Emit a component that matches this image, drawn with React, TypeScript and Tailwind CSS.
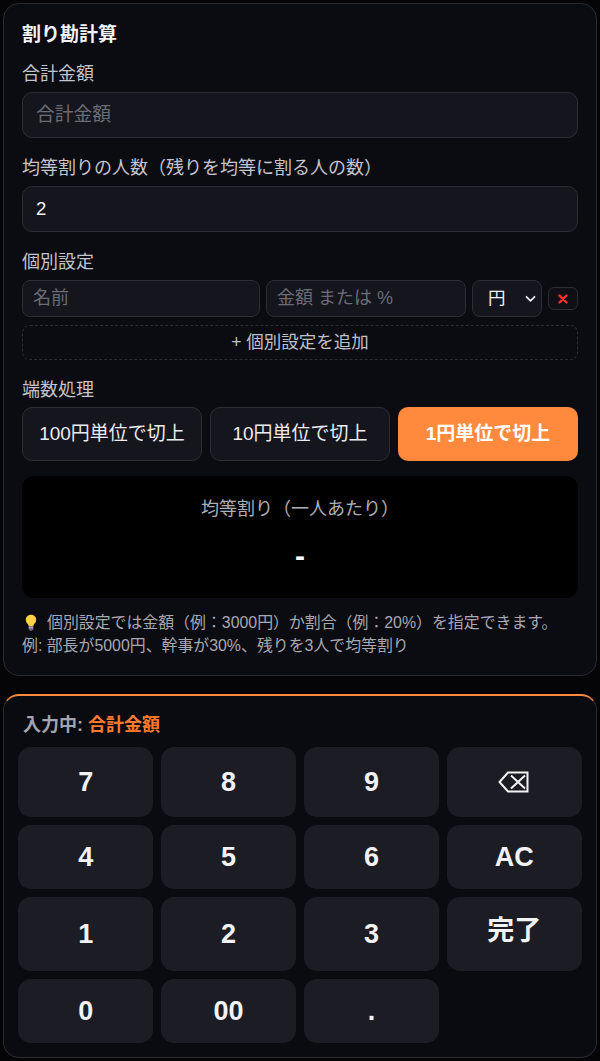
import React from "react";

const F = { fontFamily: '"Liberation Sans", "Noto Sans CJK JP", sans-serif' };

function Bulb() {
  return (
    <svg width="12" height="17" viewBox="0 0 12 17" className="inline-block mr-[10px] -mt-[2px] align-middle">
      <path d="M6 0.8C3 0.8 0.8 3 0.8 5.8c0 1.9 1 3.1 1.9 4.1.6.7 1 1.3 1 2.1h4.6c0-.8.4-1.4 1-2.1.9-1 1.9-2.2 1.9-4.1C11.2 3 9 0.8 6 0.8z" fill="#ffd23f" />
      <rect x="3.6" y="12.3" width="4.8" height="1.6" fill="#b9a6c9" />
      <rect x="3.6" y="14.1" width="4.8" height="1.5" fill="#9c86b0" />
      <rect x="4.6" y="15.6" width="2.8" height="1.1" rx="0.5" fill="#7d6b8e" />
    </svg>
  );
}

function Key({ label, cls = "" }: { label: React.ReactNode; cls?: string }) {
  return (
    <div className={`flex items-center justify-center rounded-[13px] bg-[#1c1c24] text-[27px] font-bold text-[#f2f2f5] ${cls}`}>
      {label}
    </div>
  );
}

export default function App() {
  return (
    <div style={F} className="min-h-[1061px] w-[600px] bg-[#050508] px-[3px] pt-[3px] pb-[3px]">
      {/* Card */}
      <div className="rounded-[16px] border border-[#2a2a33] bg-[#0b0b12] p-[18px]">
        <div className="h-[26px] text-[19px] font-bold leading-[26px] text-[#f4f4f6] mb-[14px]">割り勘計算</div>

        <div className="text-[18px] leading-[24px] text-[#c4c4cc] mb-[6px]">合計金額</div>
        <div className="h-[46px] rounded-[10px] border border-[#2c2c36] bg-[#15151d] pl-[13px] flex items-center text-[18.8px] text-[#6c6c76] mb-[18px]">合計金額</div>

        <div className="text-[18px] leading-[24px] text-[#c4c4cc] mb-[6px]">均等割りの人数（残りを均等に割る人の数）</div>
        <div className="h-[46px] rounded-[10px] border border-[#2c2c36] bg-[#15151d] pl-[13px] flex items-center text-[18.5px] text-[#f4f4f6] mb-[18px]">2</div>

        <div className="text-[18px] leading-[24px] text-[#c4c4cc] mb-[6px]">個別設定</div>
        <div className="flex items-center gap-[6px] h-[37px]">
          <div className="h-[37px] flex-1 min-w-0 rounded-[8px] border border-[#2c2c36] bg-[#15151d] pl-[10px] flex items-center text-[18px] text-[#6c6c76]">名前</div>
          <div className="h-[37px] w-[200px] shrink-0 rounded-[8px] border border-[#2c2c36] bg-[#15151d] pl-[10px] flex items-center text-[18px] text-[#6c6c76]">金額 または %</div>
          <div className="h-[37px] w-[70px] shrink-0 rounded-[8px] border border-[#2c2c36] bg-[#15151d] flex items-center justify-between pl-[15px] pr-[5px] text-[17.5px] text-[#f0f0f3]">
            <span>円</span>
            <svg width="11" height="8" viewBox="0 0 11 8"><path d="M1.5 1.8 5.5 5.8 9.5 1.8" stroke="#e8e8ec" strokeWidth="1.8" fill="none" strokeLinecap="round" strokeLinejoin="round" /></svg>
          </div>
          <div className="h-[23px] w-[30px] shrink-0 rounded-[6px] border border-[#2c2c36] bg-[#0f0f16] flex items-center justify-center">
            <svg width="10" height="10" viewBox="0 0 10 10"><path d="M1.5 1.5 8.5 8.5M8.5 1.5 1.5 8.5" stroke="#ff3030" strokeWidth="2.4" strokeLinecap="round" /></svg>
          </div>
        </div>
        <div className="mt-[8px] h-[35px] rounded-[8px] border border-dashed border-[#2c2c36] flex items-center justify-center text-[17.5px] text-[#c0c0c8] mb-[18px]">+&nbsp;個別設定を追加</div>

        <div className="text-[18px] leading-[24px] text-[#c4c4cc] mb-[5px]">端数処理</div>
        <div className="grid grid-cols-3 gap-[8px] mb-[15px]">
          <div className="h-[54px] rounded-[10px] border border-[#2c2c36] bg-[#15151d] flex items-center justify-center text-[19px] text-[#ececf0]">100円単位で切上</div>
          <div className="h-[54px] rounded-[10px] border border-[#2c2c36] bg-[#15151d] flex items-center justify-center text-[19px] text-[#ececf0]">10円単位で切上</div>
          <div className="h-[54px] rounded-[10px] bg-[#ff8a3d] flex items-center justify-center text-[19px] font-bold text-white">1円単位で切上</div>
        </div>

        <div className="rounded-[12px] bg-black pt-[20px] pb-[22px] flex flex-col items-center mb-[13px]">
          <div className="h-[26px] leading-[26px] text-[18px] text-[#aeaeb6]">均等割り（一人あたり）</div>
          <div className="mt-[14px] h-[40px] leading-[40px] text-[30px] font-bold text-white">-</div>
        </div>

        <div className="text-[15.9px] leading-[23px] text-[#a8a8b0] pl-[3px] whitespace-nowrap">
          <div><Bulb />個別設定では金額（例：3000円）か割合（例：20%）を指定できます。</div>
          <div className="-ml-[3px]">例: 部長が5000円、幹事が30%、残りを3人で均等割り</div>
        </div>
      </div>

      {/* Keypad */}
      <div className="mt-[18px] rounded-[16px] border border-[#2a2a33] border-t-2 border-t-[#ff8a3d] bg-[#0a0a11] px-[14px] pt-[15px] pb-[14px]">
        <div className="h-[28px] leading-[28px] text-[18px] font-semibold text-[#a4a4ac] mb-[8px] pl-[5px]">
          入力中: <span className="font-bold text-[#ff7a2e]">合計金額</span>
        </div>
        <div className="grid grid-cols-4 grid-rows-[70px_64px_74px_64px] gap-x-[7.5px] gap-y-[8px]">
          <Key label="7" />
          <Key label="8" />
          <Key label="9" />
          <Key
            label={
              <svg width="32" height="22" viewBox="0 0 32 22">
                <path d="M10 1.5H29.5V20.5H10L1.5 11Z" stroke="#f2f2f5" strokeWidth="2" fill="none" strokeLinejoin="miter" />
                <path d="M13 4.5 27 17.5M27 4.5 13 17.5" stroke="#f2f2f5" strokeWidth="2" />
              </svg>
            }
          />
          <Key label="4" />
          <Key label="5" />
          <Key label="6" />
          <Key label="AC" />
          <Key label="1" />
          <Key label="2" />
          <Key label="3" />
          <Key label="完了" cls="pb-[6px]" />
          <Key label="0" />
          <Key label="00" />
          <Key label="." />
          <div />
        </div>
      </div>
    </div>
  );
}
